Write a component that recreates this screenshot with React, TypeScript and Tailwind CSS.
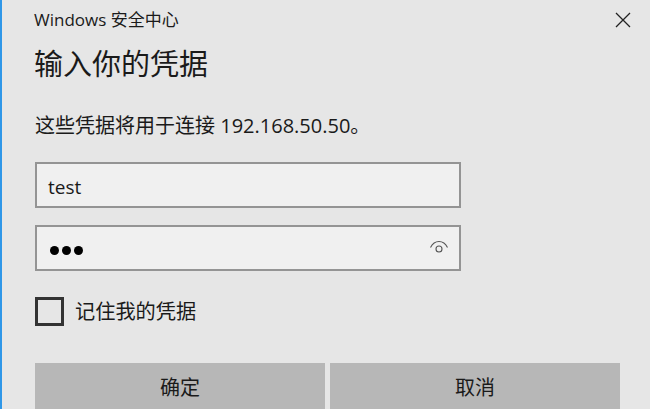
const font = "[font-family:'Open_Sans','Noto_Sans_CJK_SC',sans-serif]";

const App = () => {
  return (
    <div className={`h-[409px] w-[650px] overflow-hidden border-l-2 border-[#2f97e8] bg-[#e6e6e6] pl-[33px] text-[#1a1a1a] ${font}`}>
      <div className="flex h-[40px] items-center justify-between pr-[19px]">
        <span className="-ml-px pb-[2px] text-[17px] leading-none">Windows 安全中心</span>
        <svg width="16" height="16" viewBox="0 0 16 16" className="text-[#222]">
          <path d="M1 1L15 15M15 1L1 15" stroke="currentColor" strokeWidth="1.3" />
        </svg>
      </div>
      <h1 className="-ml-px mt-[4px] text-[29px] leading-[40px]">输入你的凭据</h1>
      <p className="mt-[28px] text-[20px] leading-[28px]">这些凭据将用于连接 192.168.50.50。</p>
      <div className="mt-[22px] flex h-[46px] w-[426px] items-center border-2 border-[#949494] bg-[#f0f0f0] pl-[11px] pt-[5px] text-[19px]">
        test
      </div>
      <div className="mt-[17px] flex h-[46px] w-[426px] items-center justify-between border-2 border-[#949494] bg-[#f0f0f0] pl-[13px] pr-[10px]">
        <div className="flex gap-[3px] pt-[5px]">
          <span className="h-[9px] w-[9px] rounded-full bg-black" />
          <span className="h-[9px] w-[9px] rounded-full bg-black" />
          <span className="h-[9px] w-[9px] rounded-full bg-black" />
        </div>
        <svg width="20" height="14" viewBox="0 0 20 14" fill="none" stroke="#555" strokeWidth="1.1" className="mb-[2px]">
          <path d="M1.5 7.5C3.5 3.5 6.5 1.5 10 1.5S16.5 3.5 18.5 7.5" />
          <circle cx="10" cy="9" r="3" />
        </svg>
      </div>
      <label className="mt-[26px] flex items-center gap-[11px]">
        <span className="h-[29px] w-[29px] border-[3px] border-[#333]" />
        <span className="text-[20.2px] leading-[29px]">记住我的凭据</span>
      </label>
      <div className="mt-[37px] flex gap-[5px]">
        <button className="h-[46px] w-[290px] bg-[#b7b7b7] pt-[3px] text-[20px]">确定</button>
        <button className="h-[46px] w-[290px] bg-[#b7b7b7] pt-[3px] text-[20px]">取消</button>
      </div>
    </div>
  );
};

export default App;
